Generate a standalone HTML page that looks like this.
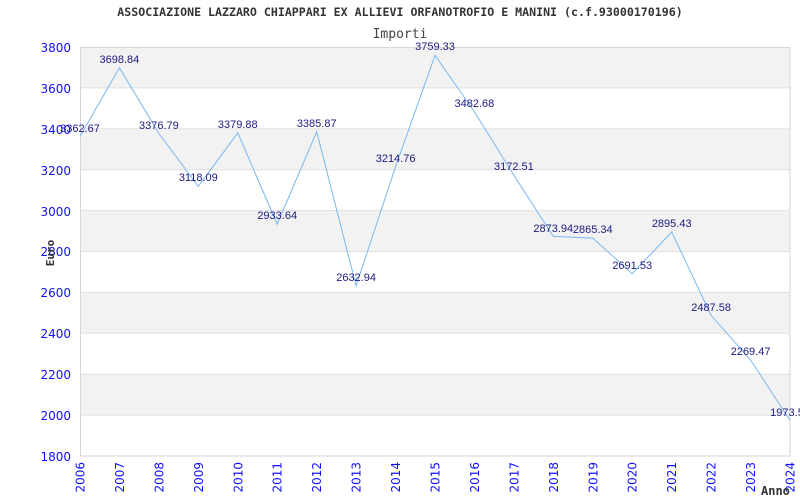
<!DOCTYPE html>
<html><head><meta charset="utf-8"><style>html,body{margin:0;padding:0;background:#fff;width:800px;height:500px;overflow:hidden}</style></head>
<body>
<svg width="800" height="500" xmlns="http://www.w3.org/2000/svg" font-family="DejaVu Sans, Liberation Sans, sans-serif">
<rect x="80" y="47" width="710" height="40.9" fill="#f2f2f2"/>
<rect x="80" y="128.8" width="710" height="40.9" fill="#f2f2f2"/>
<rect x="80" y="210.6" width="710" height="40.9" fill="#f2f2f2"/>
<rect x="80" y="292.4" width="710" height="40.9" fill="#f2f2f2"/>
<rect x="80" y="374.2" width="710" height="40.9" fill="#f2f2f2"/>
<g stroke="#e0e0e0" stroke-width="1">
<line x1="80" x2="790" y1="87.9" y2="87.9"/><line x1="80" x2="790" y1="128.8" y2="128.8"/><line x1="80" x2="790" y1="169.7" y2="169.7"/><line x1="80" x2="790" y1="210.6" y2="210.6"/><line x1="80" x2="790" y1="251.5" y2="251.5"/><line x1="80" x2="790" y1="292.4" y2="292.4"/><line x1="80" x2="790" y1="333.3" y2="333.3"/><line x1="80" x2="790" y1="374.2" y2="374.2"/><line x1="80" x2="790" y1="415.1" y2="415.1"/>
</g>
<rect x="80.5" y="47.5" width="709.5" height="408.5" fill="none" stroke="#d6d6d6"/>
<text x="400" y="16" text-anchor="middle" font-family="DejaVu Sans Mono, Liberation Mono, monospace" font-size="11.6" font-weight="bold" fill="#333">ASSOCIAZIONE LAZZARO CHIAPPARI EX ALLIEVI ORFANOTROFIO E MANINI (c.f.93000170196)</text>
<text x="400" y="38" text-anchor="middle" font-family="DejaVu Sans Mono, Liberation Mono, monospace" font-size="13" fill="#444">Importi</text>
<g font-size="12" fill="#1010ff" text-anchor="end">
<text x="71" y="52">3800</text><text x="71" y="93">3600</text><text x="71" y="134">3400</text><text x="71" y="175">3200</text><text x="71" y="216">3000</text><text x="71" y="256">2800</text><text x="71" y="297">2600</text><text x="71" y="338">2400</text><text x="71" y="379">2200</text><text x="71" y="420">2000</text><text x="71" y="461">1800</text>
</g>
<text transform="translate(54,253) rotate(-90)" text-anchor="middle" font-family="DejaVu Sans Mono, monospace" font-size="11" font-weight="bold" fill="#333">Euro</text>
<g font-size="12" fill="#1010ff" text-anchor="end">
<text transform="translate(84.5,462) rotate(-90)">2006</text><text transform="translate(123.9,462) rotate(-90)">2007</text><text transform="translate(163.4,462) rotate(-90)">2008</text><text transform="translate(202.8,462) rotate(-90)">2009</text><text transform="translate(242.3,462) rotate(-90)">2010</text><text transform="translate(281.7,462) rotate(-90)">2011</text><text transform="translate(321.2,462) rotate(-90)">2012</text><text transform="translate(360.6,462) rotate(-90)">2013</text><text transform="translate(400.1,462) rotate(-90)">2014</text><text transform="translate(439.5,462) rotate(-90)">2015</text><text transform="translate(478.9,462) rotate(-90)">2016</text><text transform="translate(518.4,462) rotate(-90)">2017</text><text transform="translate(557.8,462) rotate(-90)">2018</text><text transform="translate(597.3,462) rotate(-90)">2019</text><text transform="translate(636.7,462) rotate(-90)">2020</text><text transform="translate(676.2,462) rotate(-90)">2021</text><text transform="translate(715.6,462) rotate(-90)">2022</text><text transform="translate(755.1,462) rotate(-90)">2023</text><text transform="translate(794.5,462) rotate(-90)">2024</text>
</g>
<text x="761" y="495" font-family="DejaVu Sans Mono, monospace" font-size="12" font-weight="bold" fill="#333">Anno</text>
<polyline fill="none" stroke="#7ab8f0" stroke-width="1" points="80,136.4 119.4,67.7 158.9,133.5 198.3,186.4 237.8,132.9 277.2,224.2 316.7,131.7 356.1,285.7 395.6,166.7 435,55.3 474.4,111.9 513.9,175.3 553.3,236.4 592.8,238.1 632.2,273.7 671.7,232 711.1,315.4 750.6,360 790,420.5"/>
<g font-family="Liberation Sans, Arial, sans-serif" font-size="11" fill="#1a1a80" text-anchor="middle">
<text x="80" y="132">3362.67</text><text x="119.4" y="63">3698.84</text><text x="158.9" y="129">3376.79</text><text x="198.3" y="181">3118.09</text><text x="237.8" y="128">3379.88</text><text x="277.2" y="219">2933.64</text><text x="316.7" y="127">3385.87</text><text x="356.1" y="281">2632.94</text><text x="395.6" y="162">3214.76</text><text x="435" y="50">3759.33</text><text x="474.4" y="107">3482.68</text><text x="513.9" y="170">3172.51</text><text x="553.3" y="232">2873.94</text><text x="592.8" y="233">2865.34</text><text x="632.2" y="269">2691.53</text><text x="671.7" y="227">2895.43</text><text x="711.1" y="311">2487.58</text><text x="750.6" y="355">2269.47</text><text x="787" y="416">1973.5</text>
</g>
</svg>
</body></html>
